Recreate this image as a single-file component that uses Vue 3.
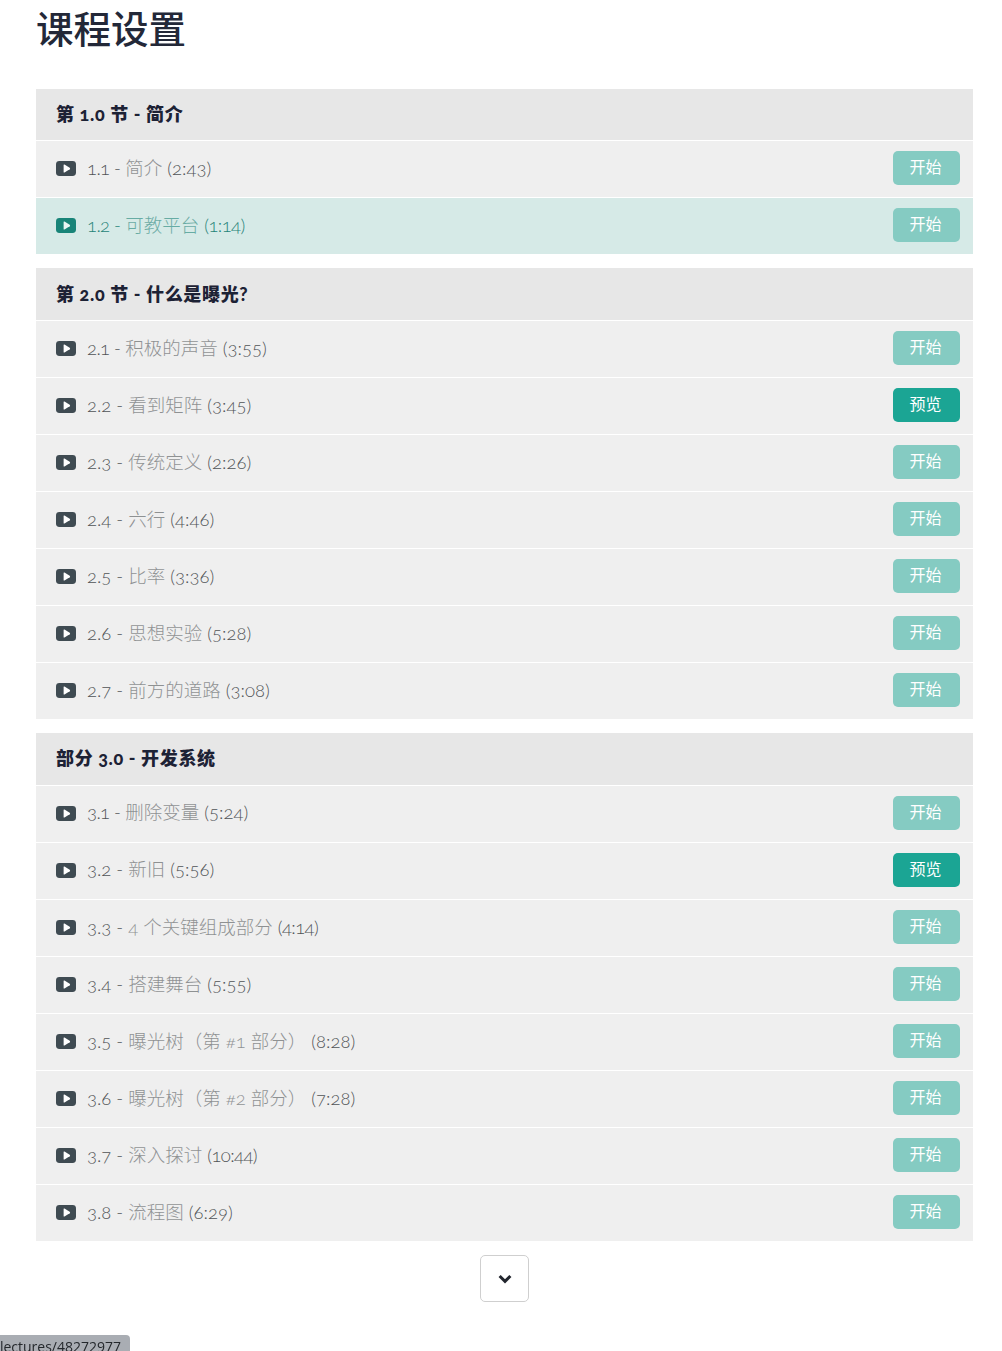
<script setup>
const sections = [
  {
    title: '第 1.0 节 - 简介',
    lectures: [
      { num: '1.1', name: '简介', time: '(2:43)', action: '开始' },
      { num: '1.2', name: '可教平台', time: '(1:14)', action: '开始', active: true },
    ],
  },
  {
    title: '第 2.0 节 - 什么是曝光?',
    lectures: [
      { num: '2.1', name: '积极的声音', time: '(3:55)', action: '开始' },
      { num: '2.2', name: '看到矩阵', time: '(3:45)', action: '预览', preview: true },
      { num: '2.3', name: '传统定义', time: '(2:26)', action: '开始' },
      { num: '2.4', name: '六行', time: '(4:46)', action: '开始' },
      { num: '2.5', name: '比率', time: '(3:36)', action: '开始' },
      { num: '2.6', name: '思想实验', time: '(5:28)', action: '开始' },
      { num: '2.7', name: '前方的道路', time: '(3:08)', action: '开始' },
    ],
  },
  {
    title: '部分 3.0 - 开发系统',
    lectures: [
      { num: '3.1', name: '删除变量', time: '(5:24)', action: '开始' },
      { num: '3.2', name: '新旧', time: '(5:56)', action: '预览', preview: true },
      { num: '3.3', name: '4 个关键组成部分', time: '(4:14)', action: '开始' },
      { num: '3.4', name: '搭建舞台', time: '(5:55)', action: '开始' },
      { num: '3.5', name: '曝光树（第 #1 部分）', time: '(8:28)', action: '开始' },
      { num: '3.6', name: '曝光树（第 #2 部分）', time: '(7:28)', action: '开始' },
      { num: '3.7', name: '深入探讨', time: '(10:44)', action: '开始' },
      { num: '3.8', name: '流程图', time: '(6:29)', action: '开始' },
    ],
  },
]
const hasOne = (text) => text.includes('1')
</script>

<template>
  <main class="page">
    <h1 class="title">课程设置</h1>
    <section v-for="s in sections" :key="s.title" class="section">
      <h2 class="head">{{ s.title }}</h2>
      <div
        v-for="l in s.lectures"
        :key="l.num"
        class="row"
        :class="{ active: l.active }"
      >
        <svg class="play" viewBox="0 0 20 15" aria-hidden="true">
          <rect width="20" height="15" rx="3.4" class="play-bg" />
          <path d="M7.6 4 Q7.6 3.1 8.5 3.6 L13.7 6.8 Q14.6 7.5 13.7 8.2 L8.5 11.4 Q7.6 11.9 7.6 11 Z" class="play-fg" />
        </svg>
        <span class="label"><span class="num" :class="{ tight: hasOne(l.num) }">{{ l.num }} -</span> <span class="name">{{ l.name }}</span> <span class="time" :class="{ tight: hasOne(l.time) }">{{ l.time }}</span></span>
        <button class="btn" :class="{ preview: l.preview }">{{ l.action }}</button>
      </div>
    </section>
    <div class="more">
      <button class="more-btn" aria-label="更多">
        <svg viewBox="0 0 14 10" width="14" height="10" aria-hidden="true">
          <path d="M1.6 2 L7 7.4 L12.4 2" fill="none" stroke="#22262e" stroke-width="3" />
        </svg>
      </button>
    </div>
    <div class="status"><span>lectures/48272977</span></div>
  </main>
</template>

<style>
html, body { margin: 0; background: #fff; overflow: hidden; }
</style>

<style scoped>
.page {
  width: 937px;
  margin-left: 36px;
  font-family: Lato, "Noto Sans CJK SC", sans-serif;
  font-variant-numeric: oldstyle-nums;
}
.title {
  margin: 0;
  height: 88.9px;
  padding-top: 5px;
  box-sizing: border-box;
  font-size: 37.5px;
  line-height: 48px;
  font-weight: 500;
  color: #232838;
}
.section { margin-bottom: 13.8px; }
.head {
  margin: 0;
  height: 51.4px;
  padding: 0 20px 2.8px;
  display: flex;
  align-items: center;
  box-sizing: border-box;
  background: #e7e7e7;
  font-size: 18px;
  font-weight: 900;
  letter-spacing: 0.65px;
  color: #1d2235;
}
.row {
  height: 57.1px;
  box-sizing: border-box;
  border-top: 1px solid #fff;
  padding: 0 13px 0 20px;
  display: flex;
  align-items: center;
  background: #efefef;
  color: #4f5356;
}
.row.active { background: #d6eae7; color: #1f8378; }
.play { width: 20px; height: 15px; flex: none; margin-top: -1px; }
.play-bg { fill: #3f4b52; }
.play-fg { fill: #fff; }
.row.active .play-bg { fill: #188478; }
.row.active .play-fg { fill: #e8f5f3; }
.label {
  margin: -2.3px 0 0 11px;
  font-size: 18.5px;
  font-weight: 300;
  line-height: 24px;
  white-space: pre-wrap;
}
.num.tight { letter-spacing: -0.6px; }
.time.tight { letter-spacing: -0.6px; }
.name { opacity: 0.6; }
.btn {
  margin-left: auto;
  margin-top: -2px;
  width: 67px;
  height: 34px;
  border: 0;
  border-radius: 5px;
  padding: 0 2px 2px 0;
  background: #85cbc2;
  color: #fff;
  font: 400 16px/32px Lato, "Noto Sans CJK SC", sans-serif;
}
.btn.preview { background: #1ba594; }
.more {
  display: flex;
  justify-content: center;
}
.more-btn {
  width: 49px;
  height: 47px;
  background: #fff;
  border: 1px solid #cfcfcf;
  border-radius: 5px;
  padding: 0;
  display: flex;
  align-items: center;
  justify-content: center;
}
.status {
  position: fixed;
  left: 0;
  bottom: 0;
  width: 130px;
  height: 16px;
  overflow: hidden;
  display: flex;
  justify-content: flex-end;
  background: #a9adb3;
  border-top-right-radius: 4px;
  color: #24282c;
  font: 400 14px/23px "Open Sans", sans-serif;
}
.status span { flex: none; margin-right: 9px; white-space: nowrap; }
</style>
